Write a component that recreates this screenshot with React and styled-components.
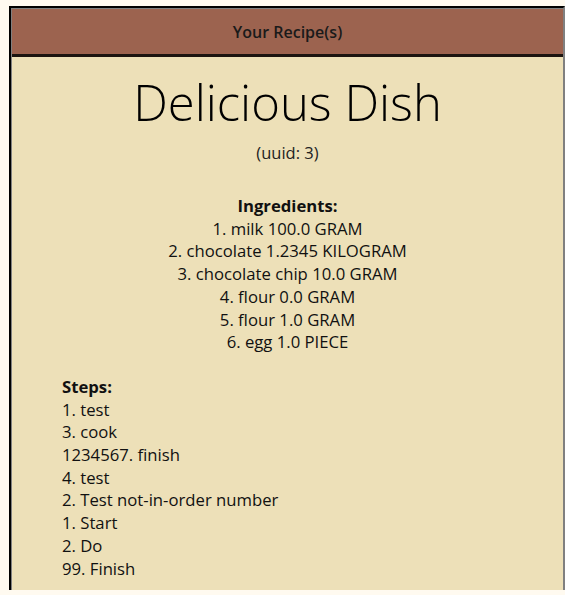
import React from "react";
import styled, { createGlobalStyle } from "styled-components";

const Global = createGlobalStyle`
  html, body { margin: 0; padding: 0; background: #fffaf0; }
  body { font-family: "Open Sans", "Noto Sans", sans-serif; color: #111; overflow: hidden; }
`;

const Page = styled.div`
  padding: 6px 0 0 9px;
`;

const Frame = styled.div`
  border-top: 2px solid #000;
  border-left: 2px solid #000;
  border-right: 2px solid #808080;
`;

const Panel = styled.div`
  border-top: 1px solid #808080;
  border-left: 1px solid #808080;
`;

const Header = styled.div`
  height: 45px;
  background: #9c634f;
  border-bottom: 3px solid #1c1410;
  display: flex;
  align-items: center;
  justify-content: center;
  font-weight: 600;
  font-size: 16px;
  color: #1a1a1a;
`;

const Content = styled.div`
  height: 533px;
  background: #ede0b8;
  overflow: hidden;
  display: flex;
  flex-direction: column;
`;

const Title = styled.h1`
  margin: 15px 0 0;
  font-weight: 300;
  font-size: 49px;
  line-height: 60px;
  text-align: center;
  color: #000;
`;

const Uuid = styled.div`
  margin-top: 10px;
  text-align: center;
  font-size: 16.5px;
  line-height: 22px;
  color: #222;
`;

const Section = styled.div`
  font-size: 16.7px;
  line-height: 22.7px;
  color: #111;
  text-align: ${(p) => (p.$center ? "center" : "left")};
  padding-left: ${(p) => (p.$center ? "0" : "50px")};
  margin-top: ${(p) => p.$top}px;
`;

const Heading = styled.div`
  font-weight: 700;
`;

const ingredients = [
  "1. milk 100.0 GRAM",
  "2. chocolate 1.2345 KILOGRAM",
  "3. chocolate chip 10.0 GRAM",
  "4. flour 0.0 GRAM",
  "5. flour 1.0 GRAM",
  "6. egg 1.0 PIECE",
];

const steps = [
  "1. test",
  "3. cook",
  "1234567. finish",
  "4. test",
  "2. Test not-in-order number",
  "1. Start",
  "2. Do",
  "99. Finish",
];

export default function App() {
  return (
    <Page>
      <Global />
      <Frame>
        <Panel>
          <Header>Your Recipe(s)</Header>
          <Content>
            <Title>Delicious Dish</Title>
            <Uuid>(uuid: 3)</Uuid>
            <Section $center $top={31}>
              <Heading>Ingredients:</Heading>
              {ingredients.map((t, i) => (
                <div key={i}>{t}</div>
              ))}
            </Section>
            <Section $top={22}>
              <Heading>Steps:</Heading>
              {steps.map((t, i) => (
                <div key={i}>{t}</div>
              ))}
            </Section>
          </Content>
        </Panel>
      </Frame>
    </Page>
  );
}
